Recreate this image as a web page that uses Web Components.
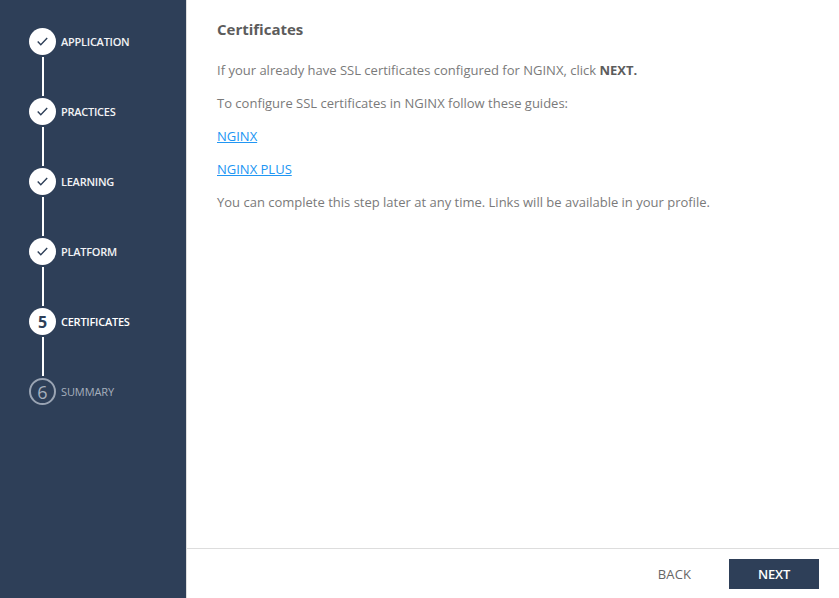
<!DOCTYPE html>
<html>
<head>
<meta charset="utf-8">
<style>
html, body { margin: 0; height: 100%; }
body { font-family: "Open Sans", sans-serif; overflow: hidden; }
</style>
</head>
<body>
<wizard-layout>
  <wizard-steps slot="side">
    <wizard-step state="done" label="APPLICATION"></wizard-step>
    <wizard-step state="done" label="PRACTICES"></wizard-step>
    <wizard-step state="done" label="LEARNING"></wizard-step>
    <wizard-step state="done" label="PLATFORM"></wizard-step>
    <wizard-step state="active" num="5" label="CERTIFICATES"></wizard-step>
    <wizard-step state="todo" num="6" label="SUMMARY" last></wizard-step>
  </wizard-steps>
  <certificates-panel></certificates-panel>
  <wizard-footer slot="footer"></wizard-footer>
</wizard-layout>

<script>
const LayoutTemplate = document.createElement('template');
LayoutTemplate.innerHTML = `
<style>
:host {
  display: flex;
  width: 839px;
  height: 598px;
}
.side {
  width: 186px;
  flex: none;
  background-color: #2e3f58;
  border-right: 1px solid #dddddd;
}
.main {
  flex: 1;
  display: flex;
  flex-direction: column;
  min-width: 0;
}
.body { flex: 1; }
</style>
<div class="side"><slot name="side"></slot></div>
<div class="main">
  <div class="body"><slot></slot></div>
  <slot name="footer"></slot>
</div>
`;

class WizardLayout extends HTMLElement {
  constructor() {
    super();
    this.attachShadow({ mode: 'open' });
    this.shadowRoot.appendChild(LayoutTemplate.content.cloneNode(true));
  }
}
window.customElements.define('wizard-layout', WizardLayout);

const StepsTemplate = document.createElement('template');
StepsTemplate.innerHTML = `
<style>
:host {
  display: flex;
  flex-direction: column;
  padding: 28px 0 0 29px;
}
</style>
<slot></slot>
`;

class WizardSteps extends HTMLElement {
  constructor() {
    super();
    this.attachShadow({ mode: 'open' });
    this.shadowRoot.appendChild(StepsTemplate.content.cloneNode(true));
  }
}
window.customElements.define('wizard-steps', WizardSteps);

const StepTemplate = document.createElement('template');
StepTemplate.innerHTML = `
<style>
:host {
  display: block;
  font-family: "Open Sans", sans-serif;
}
.row {
  display: flex;
  align-items: center;
  height: 27px;
}
.dot {
  width: 27px;
  height: 27px;
  box-sizing: border-box;
  border-radius: 50%;
  flex: none;
  display: flex;
  align-items: center;
  justify-content: center;
  background-color: #ffffff;
  color: #2e3f58;
  font-size: 16px;
  font-weight: 700;
}
.label {
  margin-left: 5px;
  font-size: 11px;
  font-weight: 600;
  letter-spacing: -0.25px;
  color: #f2f3f5;
}
.line {
  width: 2px;
  height: 39px;
  margin: 2px 0 2px 13px;
  background-color: #ffffff;
}
:host([state="active"]) .label { color: #ffffff; }
:host([state="todo"]) .dot {
  background: none;
  border: 2px solid #9aa4b3;
  color: #a6afbd;
  font-weight: 400;
  font-size: 18px;
}
:host([state="todo"]) .label {
  color: #a6afbd;
  font-weight: 400;
  letter-spacing: -0.1px;
}
:host([last]) .line { display: none; }
</style>
<div class="row">
  <div class="dot"></div>
  <div class="label"></div>
</div>
<div class="line"></div>
`;

class WizardStep extends HTMLElement {
  constructor() {
    super();
    this.attachShadow({ mode: 'open' });
    this.shadowRoot.appendChild(StepTemplate.content.cloneNode(true));
  }

  connectedCallback() {
    this.shadowRoot.querySelector('.label').textContent = this.getAttribute('label');
    const dot = this.shadowRoot.querySelector('.dot');
    if (this.getAttribute('state') === 'done') {
      dot.innerHTML = '<svg width="11" height="9" viewBox="0 0 11 9"><path d="M0.7 4.6 L3.8 7.7 L10.2 1" fill="none" stroke="#2e3f58" stroke-width="1.4"/></svg>';
    } else {
      dot.textContent = this.getAttribute('num');
    }
  }
}
window.customElements.define('wizard-step', WizardStep);

const PanelTemplate = document.createElement('template');
PanelTemplate.innerHTML = `
<style>
:host {
  display: block;
  padding: 19px 30px 0 30px;
  font-family: "Open Sans", sans-serif;
  font-size: 13px;
  color: #7a7a7a;
}
h1 {
  margin: 0 0 22px 0;
  height: 20px;
  font-size: 15px;
  line-height: 20px;
  font-weight: 700;
  color: #5c5c5c;
}
p {
  margin: 0 0 15px 0;
  line-height: 18px;
}
b { color: #5c5c5c; }
a { color: #2196f3; }
</style>
<h1>Certificates</h1>
<p>If your already have SSL certificates configured for NGINX, click <b>NEXT.</b></p>
<p>To configure SSL certificates in NGINX follow these guides:</p>
<p><a href="#">NGINX</a></p>
<p><a href="#">NGINX PLUS</a></p>
<p>You can complete this step later at any time. Links will be available in your profile.</p>
`;

class CertificatesPanel extends HTMLElement {
  constructor() {
    super();
    this.attachShadow({ mode: 'open' });
    this.shadowRoot.appendChild(PanelTemplate.content.cloneNode(true));
  }
}
window.customElements.define('certificates-panel', CertificatesPanel);

const FooterTemplate = document.createElement('template');
FooterTemplate.innerHTML = `
<style>
:host {
  display: flex;
  justify-content: flex-end;
  align-items: center;
  height: 50px;
  box-sizing: border-box;
  border-top: 1px solid #dddddd;
  padding: 0 20px 0 0;
  font-family: "Open Sans", sans-serif;
}
button {
  all: unset;
  height: 30px;
  font-size: 13px;
  line-height: 30px;
  text-align: center;
  cursor: pointer;
}
.back {
  color: #666666;
  margin-right: 38px;
  letter-spacing: 0.1px;
}
.next {
  width: 90px;
  background-color: #2e3f58;
  color: #ffffff;
  font-weight: 600;
  letter-spacing: -0.2px;
}
</style>
<button class="back">BACK</button>
<button class="next">NEXT</button>
`;

class WizardFooter extends HTMLElement {
  constructor() {
    super();
    this.attachShadow({ mode: 'open' });
    this.shadowRoot.appendChild(FooterTemplate.content.cloneNode(true));
  }
}
window.customElements.define('wizard-footer', WizardFooter);
</script>
</body>
</html>
